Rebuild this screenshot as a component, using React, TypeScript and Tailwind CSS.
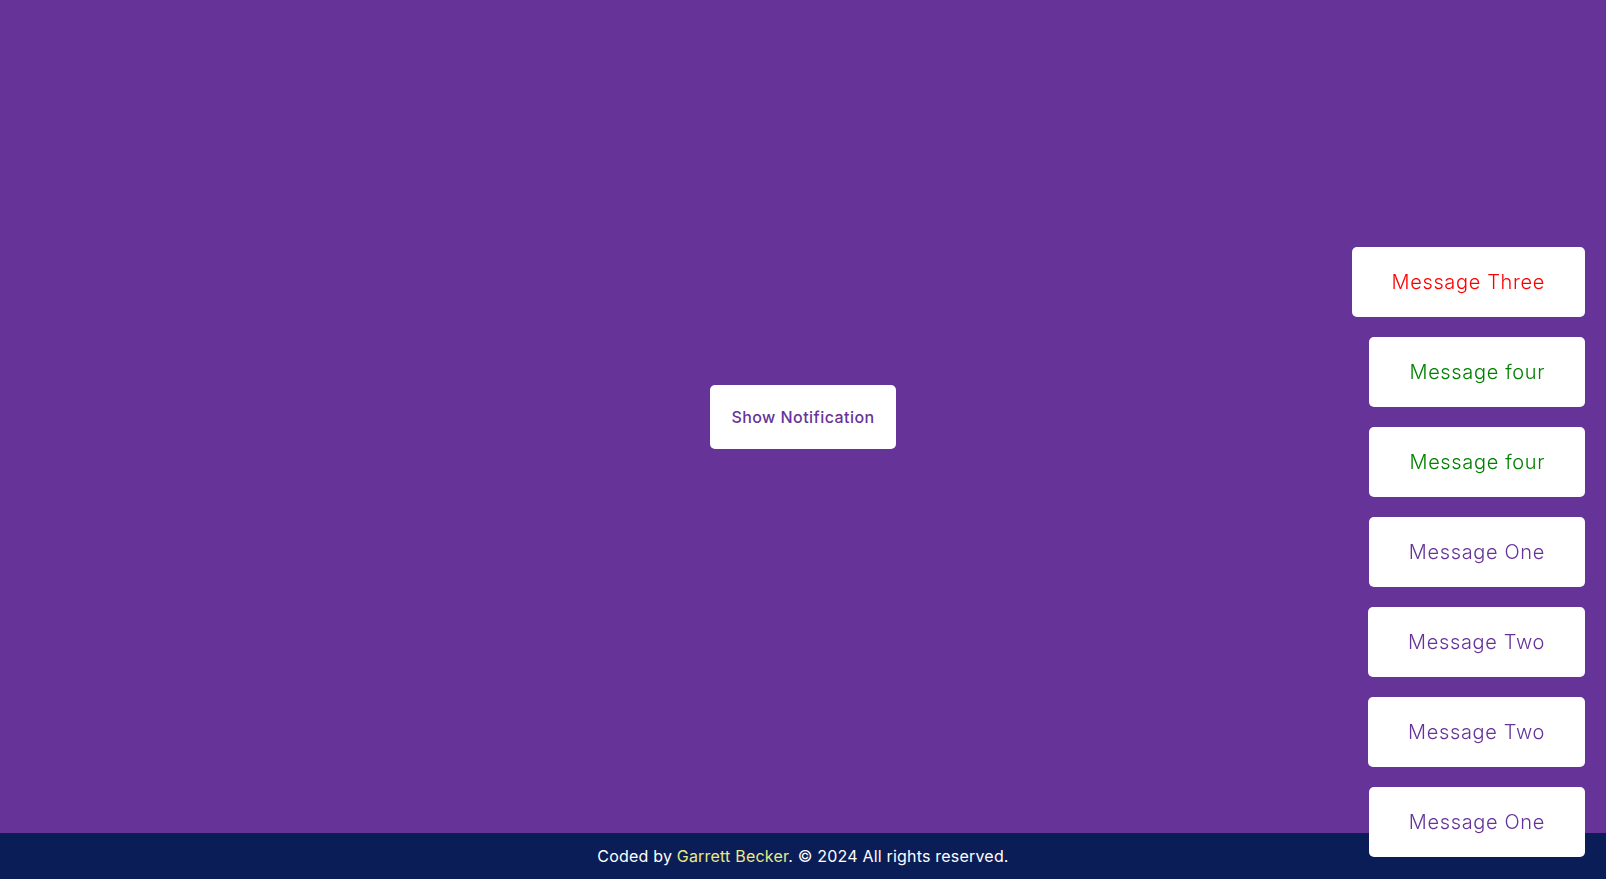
import { useState } from "react";

type Toast = { id: number; text: string; tone: "error" | "success" | "info" };

const INITIAL: Toast[] = [
  { id: 1, text: "Message Three", tone: "error" },
  { id: 2, text: "Message four", tone: "success" },
  { id: 3, text: "Message four", tone: "success" },
  { id: 4, text: "Message One", tone: "info" },
  { id: 5, text: "Message Two", tone: "info" },
  { id: 6, text: "Message Two", tone: "info" },
  { id: 7, text: "Message One", tone: "info" },
];

const TONES = {
  error: "text-[#ff0000]",
  success: "text-[#008000]",
  info: "text-[#663399]",
};

const MESSAGES = ["Message One", "Message Two", "Message Three", "Message four"];

export default function App() {
  const [toasts, setToasts] = useState<Toast[]>(INITIAL);

  const show = () => {
    const text = MESSAGES[Math.floor(Math.random() * MESSAGES.length)];
    const tone = text === "Message Three" ? "error" : text === "Message four" ? "success" : "info";
    setToasts((t) => [...t, { id: Date.now(), text, tone }]);
  };

  return (
    <div className="flex h-[879px] flex-col bg-[#663399] font-['Inter','Noto_Sans',sans-serif]">
      <main className="flex flex-1 items-center justify-center">
        <button
          type="button"
          onClick={show}
          className="rounded-[5px] bg-white px-[21px] py-[20px] text-[16px] leading-[24px] font-medium tracking-[0.45px] text-[#663399]"
        >
          Show Notification
        </button>
      </main>

      <footer className="flex h-[46px] items-center justify-center bg-[#0b1d56] text-[16px] text-white tracking-[0.2px]">
        <p>
          Coded by <span className="text-[#e8ea87]">Garrett Becker</span>. © 2024 All rights reserved.
        </p>
      </footer>

      <div className="fixed right-[21px] bottom-[22px] flex flex-col items-end gap-[20px]">
        {toasts.map((t) => (
          <div
            key={t.id}
            className={`flex h-[70px] items-center rounded-[5px] bg-white px-[40px] text-[20px] font-[350] tracking-[0.65px] ${TONES[t.tone]}`}
          >
            {t.text}
          </div>
        ))}
      </div>
    </div>
  );
}
